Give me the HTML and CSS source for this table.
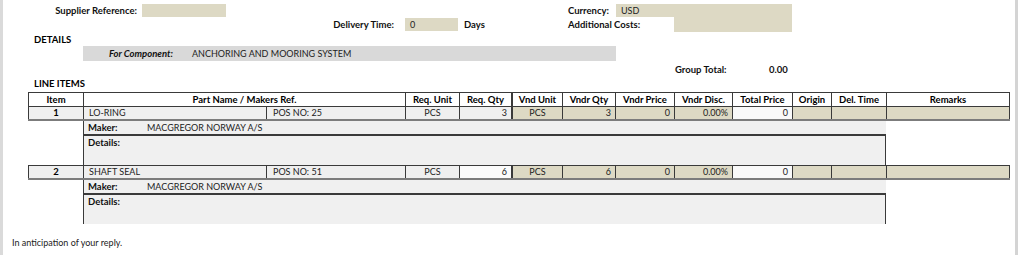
FILE: index.html
```html
<!DOCTYPE html>
<html>
<head>
<meta charset="utf-8">
<link rel="stylesheet" href="styles.css">
</head>
<body>
<div class="frame">
  <div class="head">
    <div class="hrow r1">
      <span class="lbl sup-lbl">Supplier Reference:</span>
      <span class="fld sup-fld"></span>
      <span class="lbl cur-lbl">Currency:</span>
      <span class="fld cur-fld">USD</span>
    </div>
    <div class="hrow r2">
      <span class="lbl del-lbl">Delivery Time:</span>
      <span class="fld del-fld">0</span>
      <span class="lbl days">Days</span>
      <span class="lbl add-lbl">Additional Costs:</span>
      <span class="fld add-fld"></span>
    </div>
  </div>

  <div class="section-title details-title">DETAILS</div>
  <div class="component"><span class="comp-lbl">For Component:</span><span>ANCHORING AND MOORING SYSTEM</span></div>

  <div class="group-total"><span class="lbl gt-lbl">Group Total:</span><span class="lbl gt-val">0.00</span></div>

  <div class="section-title items-title">LINE ITEMS</div>

  <div class="items">
    <div class="row hdr">
      <div class="c">Item</div>
      <div class="c span2">Part Name / Makers Ref.</div>
      <div class="c">Req. Unit</div>
      <div class="c">Req. Qty</div>
      <div class="c thick">Vnd Unit</div>
      <div class="c">Vndr Qty</div>
      <div class="c">Vndr Price</div>
      <div class="c">Vndr Disc.</div>
      <div class="c">Total Price</div>
      <div class="c">Origin</div>
      <div class="c">Del. Time</div>
      <div class="c last">Remarks</div>
    </div>

    <div class="row item">
      <div class="c num">1</div>
      <div class="c l">LO-RING</div>
      <div class="c l pos">POS NO: 25</div>
      <div class="c">PCS</div>
      <div class="c r">3</div>
      <div class="c tan thick">PCS</div>
      <div class="c tan r">3</div>
      <div class="c tan r">0</div>
      <div class="c tan r">0.00%</div>
      <div class="c total r">0</div>
      <div class="c tan"></div>
      <div class="c tan"></div>
      <div class="c tan last"></div>
    </div>
    <div class="row maker">
      <div class="blank"></div>
      <div class="mk"><span class="mk-lbl">Maker:</span><span>MACGREGOR NORWAY A/S</span></div>
      <div class="blank"></div>
    </div>
    <div class="row notes">
      <div class="blank"></div>
      <div class="nt">Details:</div>
      <div class="blank"></div>
    </div>

    <div class="row item">
      <div class="c num">2</div>
      <div class="c l">SHAFT SEAL</div>
      <div class="c l pos">POS NO: 51</div>
      <div class="c">PCS</div>
      <div class="c r focus">6</div>
      <div class="c tan thick">PCS</div>
      <div class="c tan r">6</div>
      <div class="c tan r">0</div>
      <div class="c tan r">0.00%</div>
      <div class="c total r">0</div>
      <div class="c tan"></div>
      <div class="c tan"></div>
      <div class="c tan last"></div>
    </div>
    <div class="row maker">
      <div class="blank"></div>
      <div class="mk"><span class="mk-lbl">Maker:</span><span>MACGREGOR NORWAY A/S</span></div>
      <div class="blank"></div>
    </div>
    <div class="row notes">
      <div class="blank"></div>
      <div class="nt">Details:</div>
      <div class="blank"></div>
    </div>
  </div>

  <p class="closing">In anticipation of your reply.</p>
</div>
</body>
</html>
```

FILE: styles.css
```css
* { box-sizing: border-box; }

html, body {
  margin: 0;
  background: #fff;
}

body {
  font-family: "Lato", "Liberation Sans", sans-serif;
  font-size: 9px;
  color: #222;
}

.frame {
  width: 1018px;
  height: 255px;
  border-left: 3px solid #dadada;
  border-right: 3px solid #d4d4d4;
  overflow: hidden;
}

/* header fields */
.hrow {
  display: flex;
  align-items: center;
}
.r1 { margin-top: 4px; height: 13px; }
.r2 { height: 15px; }

.lbl {
  font-weight: bold;
  font-size: 9.5px;
  color: #111;
  white-space: nowrap;
  line-height: 13px;
}
.fld {
  background: #ddd9c4;
  height: 13px;
  line-height: 13px;
  padding-left: 5px;
  color: #222;
}

.sup-lbl { width: 134px; text-align: right; }
.sup-fld { width: 84px; margin-left: 5px; }
.cur-lbl { width: 48px; margin-left: 342px; }
.cur-fld { width: 176px; }

.del-lbl { width: 391px; text-align: right; }
.del-fld { width: 53px; margin-left: 11px; }
.days { width: 104px; margin-left: 6px; }
.add-lbl { width: 106px; }
.add-fld { width: 118px; height: 15px; }

/* section headings */
.section-title {
  font-weight: bold;
  font-size: 9.5px;
  color: #000;
  padding-left: 31px;
  line-height: 11px;
}
.details-title { margin-top: 2px; }
.items-title { margin-top: 2px; line-height: 12px; }

.component {
  margin: 1px 0 0 80px;
  width: 533px;
  height: 15px;
  line-height: 15px;
  background: #d9d9d9;
  display: flex;
  color: #222;
}
.comp-lbl {
  font-weight: bold;
  font-style: italic;
  font-size: 9.5px;
  color: #111;
  width: 109px;
  padding-left: 26px;
}

.group-total {
  display: flex;
  margin: 2px 0 0 672px;
  height: 13px;
}
.gt-lbl { width: 94px; }

/* line items grid */
.items {
  margin: 2px 0 0 25px;
  width: 982px;
}
.row {
  display: grid;
  grid-template-columns: 55px 183px 139px 54px 52px 51px 53px 59px 58px 60px 39px 55px 124px;
}
.c {
  border-left: 1px solid #3a3a3a;
  text-align: center;
  white-space: nowrap;
  overflow: hidden;
  color: #222;
}
.c.last { border-right: 1px solid #3a3a3a; }
.c.thick { border-left-width: 2px; }
.span2 { grid-column: span 2; }

.hdr {
  border-top: 1px solid #3a3a3a;
  height: 14px;
}
.hdr .c {
  font-weight: bold;
  font-size: 9.5px;
  color: #000;
  line-height: 13px;
}

.item {
  border-top: 1px solid #3a3a3a;
  border-bottom: 2px solid #7c7c7c;
  height: 15px;
  background: #efefef;
}
.item .c { line-height: 12px; }
.item .l { text-align: left; padding-left: 5px; }
.item .pos { padding-left: 6px; }
.item .r { text-align: right; padding-right: 4px; }
.item .num { font-weight: bold; font-size: 9.5px; color: #000; }
.item .tan { background: #ddd9c4; }
.item .total { background: #f9f9f9; }
.item .focus { background: #fbfbfb; }

.maker, .notes {
  grid-template-columns: 55px 803px 124px;
}
.maker { height: 15px; }
.notes { height: 29px; }

.mk {
  background: #f0f0f0;
  border-left: 1px solid #3a3a3a;
  border-bottom: 2px solid #3a3a3a;
  display: flex;
  line-height: 13px;
  padding-left: 4px;
  color: #222;
}
.mk-lbl {
  width: 59px;
  font-weight: bold;
  font-size: 9.5px;
  color: #111;
}

.nt {
  background: #f0f0f0;
  border-left: 1px solid #3a3a3a;
  border-right: 1px solid #3a3a3a;
  padding: 1px 0 0 4px;
  line-height: 12px;
  font-weight: bold;
  font-size: 9.5px;
  color: #111;
}

.closing {
  margin: 13px 0 0 9px;
  line-height: 12px;
  color: #222;
}
```
